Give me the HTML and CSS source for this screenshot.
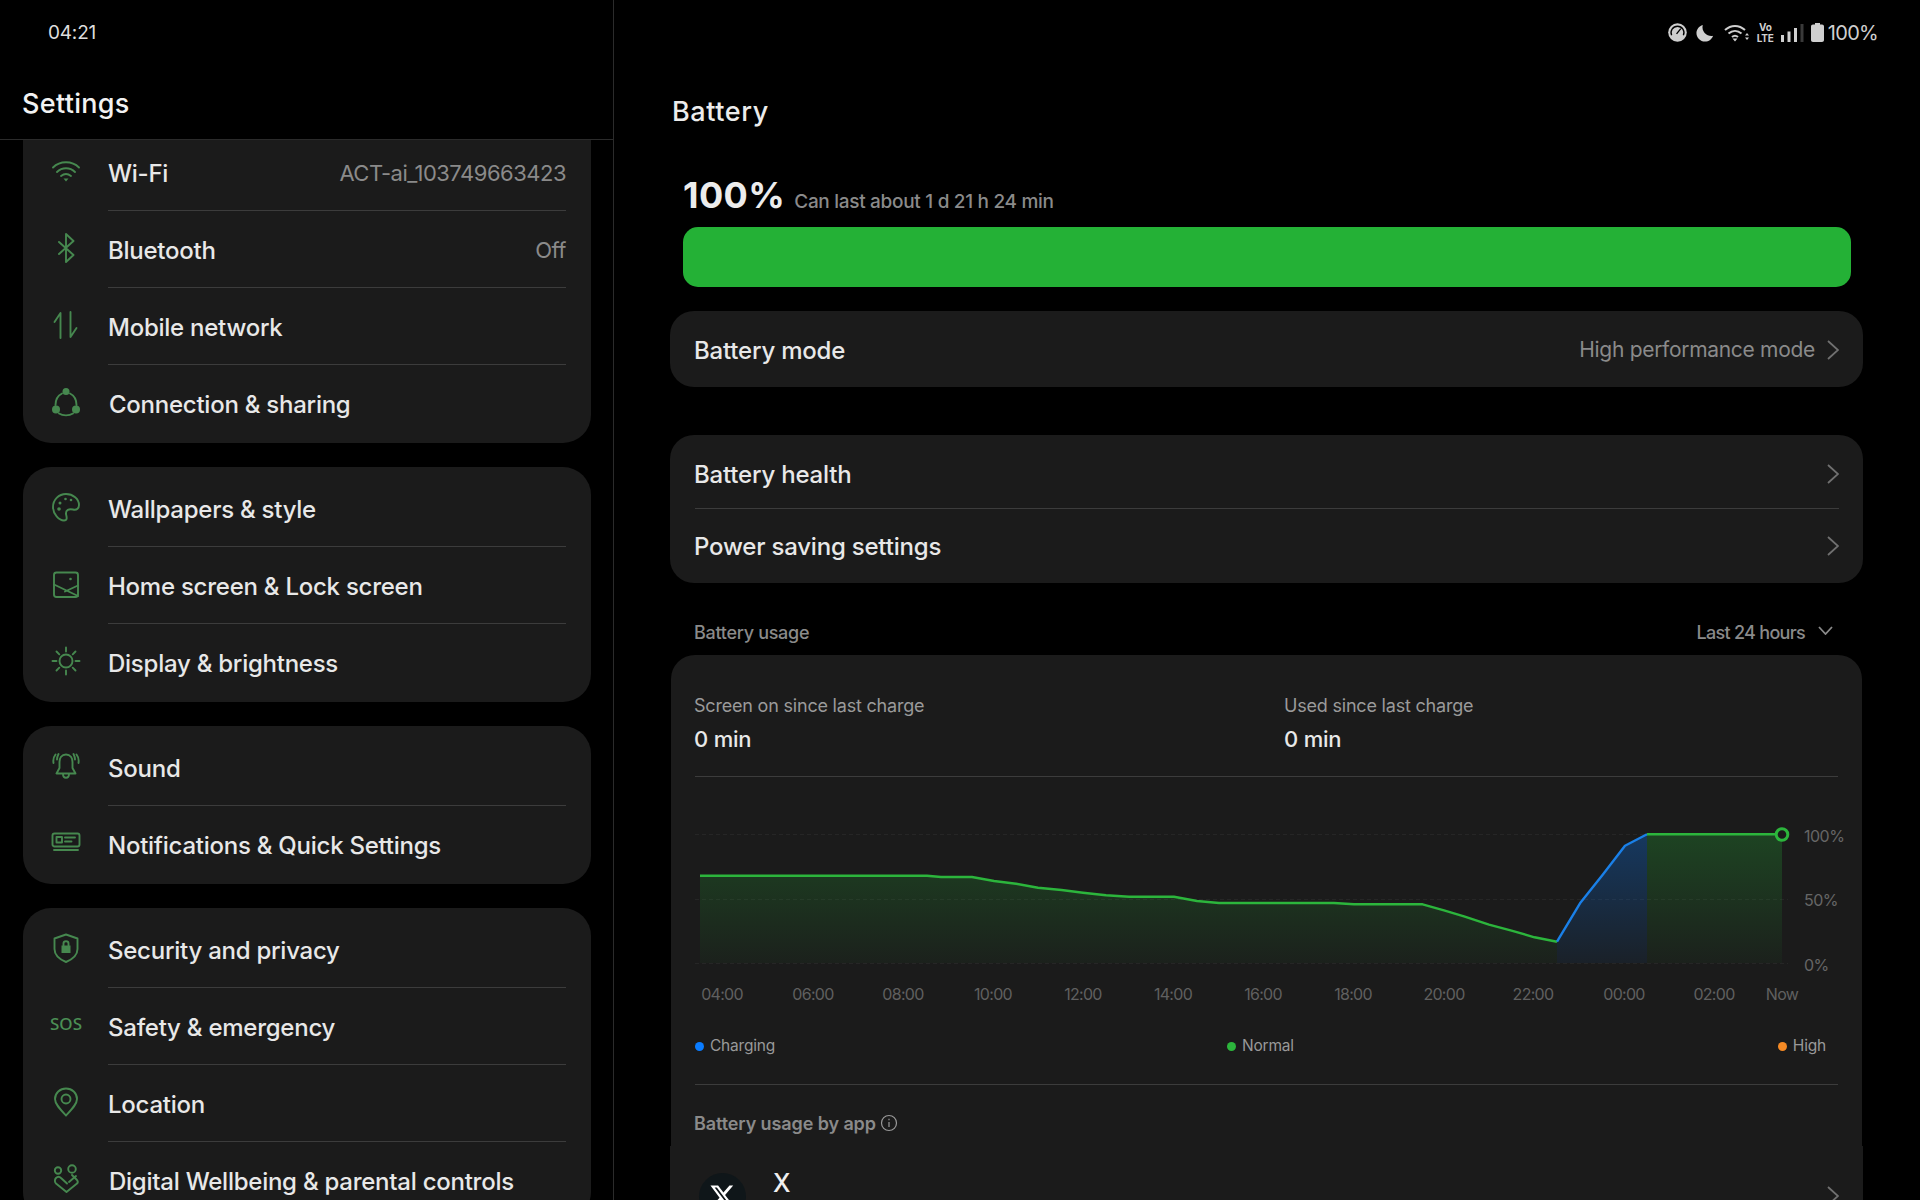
FILE: index.html
```html
<!DOCTYPE html>
<html lang="en">
<head>
<meta charset="utf-8">
<title>Battery settings</title>
<link rel="stylesheet" href="styles.css">
</head>
<body>
<div class="shell">
  <aside class="sidebar">
    <header class="side-head">
      <div class="clock">04:21</div>
      <h1 class="side-title">Settings</h1>
    </header>
    <div class="side-scroll">
      <section class="group group-first">
        <div class="row"><svg class="ico" viewBox="0 0 30 30"><path d="M2 11.5C9 4.5 21 4.500 28 11.500M6 16C11 11 19 11 24 16M10 20C13 17.500 17 17.500 20 20"/><path class="solid" d="M12.500 22.500h5L15 25.500z"/></svg><div class="row-body"><span class="label">Wi-Fi</span><span class="value">ACT-ai_103749663423</span></div></div>
        <div class="row"><svg class="ico" viewBox="0 0 30 30"><path d="M8 9L22.500 22L15 29V1L22.500 8L8 21"/></svg><div class="row-body"><span class="label">Bluetooth</span><span class="value">Off</span></div></div>
        <div class="row"><svg class="ico" viewBox="0 0 30 30"><path d="M9.500 28V3L3.500 12M19.500 2V27L25.500 18"/></svg><div class="row-body"><span class="label">Mobile network</span></div></div>
        <div class="row"><svg class="ico" viewBox="0 0 30 30"><path d="M11 6.500C7 8.500 4.500 13 4.500 18M19 6.500C23 8.500 25.500 13 25.500 18M8 26.500C12 29 18 29 22 26.500"/><circle class="solid" cx="15" cy="4.500" r="3.500"/><circle class="solid" cx="5" cy="22.500" r="4"/><circle class="solid" cx="25" cy="22.500" r="4"/></svg><div class="row-body row-last"><span class="label nudge">Connection &amp; sharing</span></div></div>
      </section>
      <section class="group">
        <div class="row"><svg class="ico" viewBox="0 0 30 30"><path d="M15 2C7.500 2 2 8 2 15C2 22 8 28.500 13 28.500C17 28.500 15.500 24.500 15 22C14.500 18 18 16.500 22 17.500C26 18.500 28 16 28 13C28 7 22 2 15 2Z"/><circle class="solid" cx="9" cy="11" r="1.500"/><circle class="solid" cx="14.500" cy="7" r="1.300"/><circle class="solid" cx="20" cy="8" r="1.300"/><circle class="solid" cx="8" cy="17" r="1.800"/></svg><div class="row-body"><span class="label">Wallpapers &amp; style</span></div></div>
        <div class="row"><svg class="ico" viewBox="0 0 30 30"><rect x="3" y="3.500" width="24" height="24.500" rx="2.500"/><path d="M3 15.500L27 27M27 16.500L14 22.500"/><circle class="solid" cx="19.500" cy="10" r="1.300"/></svg><div class="row-body"><span class="label">Home screen &amp; Lock screen</span></div></div>
        <div class="row"><svg class="ico" viewBox="0 0 30 30"><circle cx="15" cy="15" r="6.500"/><path d="M15 1.500V5.500M15 24.500V28.500M1.500 15H5.500M24.500 15H28.500M5.500 5.500L8.300 8.300M21.700 21.700L24.500 24.500M24.500 5.500L21.700 8.300M8.300 21.700L5.500 24.500"/></svg><div class="row-body row-last"><span class="label">Display &amp; brightness</span></div></div>
      </section>
      <section class="group">
        <div class="row"><svg class="ico" viewBox="0 0 30 30"><path d="M15 3.500C10.500 3.500 8.500 7 8.500 11V17L5.500 22.500H24.500L21.500 17V11C21.500 7 19.500 3.500 15 3.500ZM12 23C12 28 18 28 18 23M4.500 3.500C2.500 6 2 9 2.500 12M7.500 3C6.500 5 6 6.500 6 8.500M25.500 3.500C27.500 6 28 9 27.500 12M22.500 3C23.500 5 24 6.500 24 8.500"/></svg><div class="row-body"><span class="label">Sound</span></div></div>
        <div class="row"><svg class="ico" viewBox="0 0 30 30"><rect x="1.500" y="5.500" width="27" height="13" rx="2"/><rect x="5.500" y="9" width="5.500" height="5.500"/><path d="M14 9.500H24M14 13.500H20.500M3 22H27"/></svg><div class="row-body row-last"><span class="label">Notifications &amp; Quick Settings</span></div></div>
      </section>
      <section class="group">
        <div class="row"><svg class="ico" viewBox="0 0 30 30"><path d="M15 1.500L26.500 5.500V16C26.500 22 21 26.500 15 29C9 26.500 3.500 22 3.500 16V5.500Z"/><path class="solid" d="M10.500 12.500H19.500V20H10.500Z"/><path d="M12.500 12.500V10.500C12.500 7.500 17.500 7.500 17.500 10.500V12.500"/></svg><div class="row-body"><span class="label">Security and privacy</span></div></div>
        <div class="row"><span class="sos">SOS</span><div class="row-body"><span class="label">Safety &amp; emergency</span></div></div>
        <div class="row"><svg class="ico" viewBox="0 0 30 30"><path d="M15 28.500C9 22 4 17 4 12C4 6 9 1.500 15 1.500C21 1.500 26 6 26 12C26 17 21 22 15 28.500Z"/><circle cx="15" cy="12" r="4.500"/></svg><div class="row-body"><span class="label">Location</span></div></div>
        <div class="row"><svg class="ico" viewBox="0 0 30 30"><circle cx="7" cy="6.500" r="3.200"/><circle cx="21" cy="5" r="3.800"/><path d="M21 11L26 16C27 17.200 27 18.500 26 19.500L15.500 28L5 19.500C3.500 18 3.500 15.500 5 14C6.500 12.500 8.500 12.500 10 14L16 19.500M18 18L25 12"/></svg><div class="row-body row-last"><span class="label nudge">Digital Wellbeing &amp; parental controls</span></div></div>
      </section>
    </div>
  </aside>

  <main class="main">
    <div class="status">
      <svg class="st st-gauge" viewBox="0 0 20 20"><circle class="st-fill" cx="10" cy="10" r="9.800"/><path class="st-cutline" d="M3.800 13A6.800 6.800 0 1 1 16.200 13"/><path class="st-cutline" d="M9 11.500L13.500 6"/></svg>
      <svg class="st st-moon" viewBox="0 0 20 20"><path class="st-fill" d="M7.500 1C3.500 2.200 .5 5.800 .5 10C.5 15.300 4.700 19.500 10 19.500C14.200 19.500 17.800 16.800 19 13C13.500 14.500 5.500 9 7.500 1Z"/></svg>
      <svg class="st st-wifi" viewBox="0 0 26 18"><path class="st-line" d="M1 6C7 .5 15 .5 21 6M4.500 9.500C8.500 6 13.500 6 17.500 9.500M8 13C10 11.300 12 11.300 14 13"/><path class="st-fill" d="M8.500 14.500H13.500L11 17.500ZM21 11.500H25L23 9ZM21 13.500H25L23 16Z"/></svg>
      <span class="volte"><span>Vo</span><span>LTE</span></span>
      <svg class="st st-signal" viewBox="0 0 23 18"><path class="st-fill" d="M0 11H3V18H0ZM6.500 7.500H9.500V18H6.500ZM13 4H16V18H13Z"/><path class="st-dim" d="M19.500 0H22.500V18H19.500Z"/></svg>
      <svg class="st st-batt" viewBox="0 0 13 19"><path class="st-fill" d="M4 0H9V1.500H11C12.200 1.500 13 2.300 13 3.500V17C13 18.200 12.200 19 11 19H2C.8 19 0 18.200 0 17V3.500C0 2.300 .8 1.500 2 1.500H4Z"/></svg>
      <span class="st-pct">100%</span>
    </div>
    <div class="content">
      <h2 class="page-title">Battery</h2>
      <div class="level">
        <div class="level-text"><span class="pct">100%</span><span class="remain">Can last about 1 d 21 h 24 min</span></div>
        <div class="level-bar"></div>
      </div>
      <div class="card mode-card">
        <div class="line line-mode"><span class="line-label">Battery mode</span><span class="line-value">High performance mode</span><svg class="chev" viewBox="0 0 12 20"><path d="M1 1L11 10L1 19"/></svg></div>
      </div>
      <div class="card health-card">
        <div class="line line-split"><span class="line-label">Battery health</span><svg class="chev" viewBox="0 0 12 20"><path d="M1 1L11 10L1 19"/></svg></div>
        <div class="line"><span class="line-label">Power saving settings</span><svg class="chev" viewBox="0 0 12 20"><path d="M1 1L11 10L1 19"/></svg></div>
      </div>
      <div class="usage-head">
        <span>Battery usage</span>
        <span class="range">Last 24 hours<svg class="chev-down" viewBox="0 0 15 9"><path d="M1 1L7.500 8L14 1"/></svg></span>
      </div>
      <section class="usage-card">
        <div class="since">
          <div class="since-col since-first"><div class="since-k">Screen on since last charge</div><div class="since-v">0 min</div></div>
          <div class="since-col"><div class="since-k">Used since last charge</div><div class="since-v">0 min</div></div>
        </div>
        <svg class="chart" viewBox="671 790 1191 225">
          <defs>
            <linearGradient id="gg" gradientUnits="userSpaceOnUse" x1="0" y1="834" x2="0" y2="963"><stop offset="0" stop-color="#24b136" stop-opacity=".27"/><stop offset="1" stop-color="#24b136" stop-opacity=".04"/></linearGradient>
            <linearGradient id="gb" gradientUnits="userSpaceOnUse" x1="0" y1="834" x2="0" y2="963"><stop offset="0" stop-color="#0a7cff" stop-opacity=".3"/><stop offset="1" stop-color="#0a7cff" stop-opacity=".06"/></linearGradient>
          </defs>
          <path class="grid" d="M695 834.500H1788M695 899.500H1788M695 963.500H1788"/>
          <path fill="url(#gg)" d="M700 875.700L927 875.700L941 877L972 877L994 881L1016 883.700L1038 887.700L1061.600 890L1083 892.700L1106 895.300L1129 896.700L1174 896.700L1197 901L1219 903L1334 903L1354 904.300L1422.600 904.300L1444 910.300L1464 916.300L1489 924.700L1511.500 930.700L1534.500 937.300L1557 941.700V963H700Z"/>
          <path fill="url(#gb)" d="M1557 941.700L1580 903.300L1602.500 875L1625 845.700L1647 834.300V963H1557Z"/>
          <path fill="url(#gg)" d="M1647 834.300H1782V963H1647Z"/>
          <path class="ln ln-g" d="M700 875.700L927 875.700L941 877L972 877L994 881L1016 883.700L1038 887.700L1061.600 890L1083 892.700L1106 895.300L1129 896.700L1174 896.700L1197 901L1219 903L1334 903L1354 904.300L1422.600 904.300L1444 910.300L1464 916.300L1489 924.700L1511.500 930.700L1534.500 937.300L1557 941.700"/>
          <path class="ln ln-b" d="M1557 941.700L1580 903.300L1602.500 875L1625 845.700L1647 834.300"/>
          <path class="ln ln-g" d="M1647 834.300H1776"/>
          <circle class="end" cx="1782" cy="834.500" r="5.800"/>
          <g class="yl">
            <text x="1804" y="841.500">100%</text>
            <text x="1804" y="906">50%</text>
            <text x="1804" y="971">0%</text>
          </g>
          <g class="xl" transform="translate(-1 0)">
            <text x="723" y="1000">04:00</text><text x="814" y="1000">06:00</text><text x="904" y="1000">08:00</text><text x="994" y="1000">10:00</text><text x="1084" y="1000">12:00</text><text x="1174" y="1000">14:00</text><text x="1264" y="1000">16:00</text><text x="1354" y="1000">18:00</text><text x="1445" y="1000">20:00</text><text x="1534" y="1000">22:00</text><text x="1625" y="1000">00:00</text><text x="1715" y="1000">02:00</text><text x="1783" y="1000">Now</text>
          </g>
        </svg>
        <div class="legend">
          <span class="lg"><i class="dot dot-b"></i>Charging</span>
          <span class="lg"><i class="dot dot-g"></i>Normal</span>
          <span class="lg"><i class="dot dot-o"></i>High</span>
        </div>
        <div class="by-app"><span class="by-app-t">Battery usage by app</span><svg class="info" viewBox="0 0 18 18"><circle cx="9" cy="9" r="7.500"/><path d="M9 8V13M9 4.800V6.300"/></svg></div>
      </section>
      <section class="apps">
        <div class="app">
          <div class="avatar"><svg class="x-logo" viewBox="0 0 24 24"><path d="M18.200 2.300h3.300l-7.200 8.300 8.500 11.200h-6.700l-5.200-6.800-6 6.800H1.700l7.700-8.800L1.300 2.300H8.100l4.700 6.200zm-1.200 17.500h1.800L7 4.100H5z"/></svg></div>
          <div class="app-name">X</div>
          <svg class="chev chev-app" viewBox="0 0 12 20"><path d="M1 1L11 10L1 19"/></svg>
        </div>
      </section>
    </div>
  </main>
</div>
</body>
</html>
```
FILE: styles.css
```css
* { box-sizing: border-box; }
html, body { margin: 0; padding: 0; background: #000; }
body { font-family: Inter, "Liberation Sans", sans-serif; color: #e8e8e8; }
h1, h2 { margin: 0; font-weight: 500; }

.shell { display: flex; width: 1920px; height: 1200px; overflow: hidden; }

/* Sidebar */
.sidebar { width: 614px; flex: none; height: 1200px; border-right: 1px solid #2b2b2b; display: flex; flex-direction: column; overflow: hidden; }
.side-head { height: 140px; flex: none; border-bottom: 1px solid #2b2b2b; background: #000; position: relative; z-index: 1; padding: 21px 0 0 22px; }
.clock { font-size: 19px; line-height: 23px; padding-left: 26px; color: #ddd; letter-spacing: -.2px; }
.side-title { font-size: 27px; line-height: 36px; margin-top: 42px; color: #f2f2f2; letter-spacing: .3px; }
.side-scroll { flex: 1; min-height: 0; padding: 0 22px 0 23px; margin-top: -9px; display: flex; flex-direction: column; gap: 24px; }
.group { background: #1b1b1b; border-radius: 28px; padding: 3px 0 1px; flex: none; }
.group-first { border-radius: 0 0 28px 28px; }
.row { height: 77px; display: flex; align-items: center; padding-left: 28px; }
.ico { width: 30px; height: 30px; flex: none; margin-top: -3px; fill: none; stroke: #46884f; stroke-width: 1.9; stroke-linecap: round; stroke-linejoin: round; }
.ico .solid { fill: #46884f; stroke: none; }
.sos { width: 30px; flex: none; margin-top: -6px; font-family: "Noto Sans", sans-serif; font-size: 17px; font-weight: 500; color: #4b8f55; white-space: nowrap; display: flex; justify-content: center; }
.row-body { flex: 1; height: 77px; margin-left: 27px; margin-right: 25px; display: flex; align-items: center; justify-content: space-between; border-bottom: 1px solid #3c3c3c; padding-top: 2px; }
.row-last { border-bottom: 0; }
.label { font-size: 24px; font-weight: 550; letter-spacing: -.25px; color: #e8e8e8; white-space: nowrap; }
.nudge { margin-left: 1px; }
.value { font-size: 22px; color: #8a8a8a; letter-spacing: -.5px; white-space: nowrap; }

/* Main */
.main { flex: 1; min-width: 0; display: flex; flex-direction: column; }
.status { height: 65px; flex: none; display: flex; align-items: center; justify-content: flex-end; padding-right: 42px; }
.st { display: block; flex: none; }
.st-fill { fill: #cfcfcf; }
.st-cutline { stroke: #000; stroke-width: 1.400; fill: none; }
.st-line { stroke: #cfcfcf; stroke-width: 2; fill: none; }
.st-dim { fill: #3a3a3a; }
.st-gauge { width: 19px; height: 19px; }
.st-moon { width: 18px; height: 18px; margin-left: 9px; }
.st-wifi { width: 26px; height: 18px; margin-left: 10px; }
.volte { display: flex; flex-direction: column; align-items: center; font-size: 10px; line-height: 11px; font-weight: 700; color: #cfcfcf; margin-left: 7px; width: 17px; letter-spacing: -.2px; }
.st-signal { width: 23px; height: 18px; margin-left: 7px; margin-top: 1px; }
.st-batt { width: 13px; height: 19px; margin-left: 7px; }
.st-pct { font-size: 20px; color: #cfcfcf; margin-left: 4px; letter-spacing: -.7px; }

.content { padding: 0 57px 0 56px; flex: 1; min-height: 0; }
.page-title { font-size: 27px; line-height: 36px; margin-top: 29px; margin-left: 2px; color: #ececec; letter-spacing: .6px; }
.level { margin: 0 12px 0 13px; }
.level-text { height: 97px; display: flex; align-items: baseline; padding-top: 43px; white-space: nowrap; }
.pct { font-size: 36px; line-height: 44px; font-weight: 700; letter-spacing: .4px; color: #ececec; }
.remain { font-size: 19px; font-weight: 500; color: #8a8a8a; margin-left: 9px; letter-spacing: -.3px; }
.level-bar { height: 60px; background: #24b136; border-radius: 15px; }

.card { background: #1b1b1b; border-radius: 24px; }
.mode-card { margin-top: 24px; }
.health-card { margin-top: 48px; }
.line { height: 76px; display: flex; align-items: center; padding: 0 24px 0 25px; }
.line-mode { padding-top: 1px; }
.health-card .line { height: 74px; }
.line-split { position: relative; padding-top: 3px; }
.line-split::after { content: ""; position: absolute; left: 25px; right: 24px; bottom: 0; height: 1px; background: #3c3c3c; }
.line-label { font-size: 24px; font-weight: 550; letter-spacing: -.2px; color: #e8e8e8; flex: 1; margin-left: -1px; }
.line-mode .line-label, .line-split .line-label { margin-top: 2px; }
.line-value { font-size: 21px; color: #8a8a8a; letter-spacing: -.3px; margin-right: 12px; }
.chev { width: 12px; height: 20px; flex: none; fill: none; stroke: #707070; stroke-width: 1.8; }

.usage-head { height: 72px; display: flex; align-items: center; justify-content: space-between; padding: 26px 30px 0 24px; font-size: 18px; font-weight: 500; color: #8a8a8a; letter-spacing: -.3px; }
.range { display: flex; align-items: center; letter-spacing: -.7px; }
.chev-down { width: 15px; height: 9px; margin-left: 13px; margin-top: -3px; fill: none; stroke: #8a8a8a; stroke-width: 1.8; }

.usage-card { background: #1b1b1b; border-radius: 24px 24px 0 0; margin: 0 1px; height: 491px; padding-top: 37px; }
.since { display: flex; height: 85px; margin: 0 24px; border-bottom: 1px solid #3c3c3c; }
.since-col { margin-left: 0; }
.since-first { width: 590px; flex: none; margin-left: -1px; }
.since-k { font-size: 18px; line-height: 28px; color: #9a9a9a; letter-spacing: -.2px; }
.since-v { font-size: 22px; line-height: 28px; font-weight: 500; margin-top: 5px; color: #e8e8e8; letter-spacing: -.2px; }
.chart { display: block; width: 1191px; height: 225px; margin-top: 13px; font-family: Inter, sans-serif; }
.grid { stroke: #262626; stroke-width: 1; stroke-dasharray: 4 3; fill: none; }
.ln { fill: none; stroke-width: 2.400; stroke-linejoin: round; }
.ln-g { stroke: #2cb53c; }
.ln-b { stroke: #1a80e8; }
.end { fill: #1b1b1b; stroke: #2cb53c; stroke-width: 3; }
.yl { font-size: 16px; fill: #666; letter-spacing: -.5px; }
.xl { font-size: 16px; fill: #606060; text-anchor: middle; letter-spacing: -.7px; }

.legend { display: grid; grid-template-columns: 532px 1fr auto; margin: 19px 36px 0 24px; font-size: 15.500px; line-height: 24px; color: #999; height: 24px; }
.lg { display: flex; align-items: center; white-space: nowrap; letter-spacing: -.2px; }
.dot { width: 9px; height: 9px; border-radius: 50%; margin-right: 6px; flex: none; }
.dot-b { background: #0a7cff; }
.dot-g { background: #2cb53c; }
.dot-o { background: #f58a25; }
.by-app { margin: 26px 24px 0; border-top: 1px solid #3c3c3c; padding-top: 26px; display: flex; align-items: center; font-size: 18px; font-weight: 600; color: #8a8a8a; letter-spacing: -.1px; line-height: 26px; }
.by-app-t { margin-left: -1px; }
.info { width: 18px; height: 18px; margin-left: 4px; margin-top: -3px; fill: none; stroke: #999; stroke-width: 1.200; }

.apps { background: #1b1b1b; height: 120px; }
.app { display: flex; align-items: flex-start; padding: 27px 24px 0 29px; position: relative; }
.avatar { width: 47px; height: 47px; border-radius: 50%; background: #0f1619; flex: none; display: flex; align-items: center; justify-content: center; }
.x-logo { width: 27px; height: 27px; fill: #fff; }
.app-name { flex: 1; margin-left: 27px; margin-top: -5px; font-size: 25px; line-height: 30px; font-weight: 500; color: #f0f0f0; }
.chev-app { margin-top: 13px; }
```
